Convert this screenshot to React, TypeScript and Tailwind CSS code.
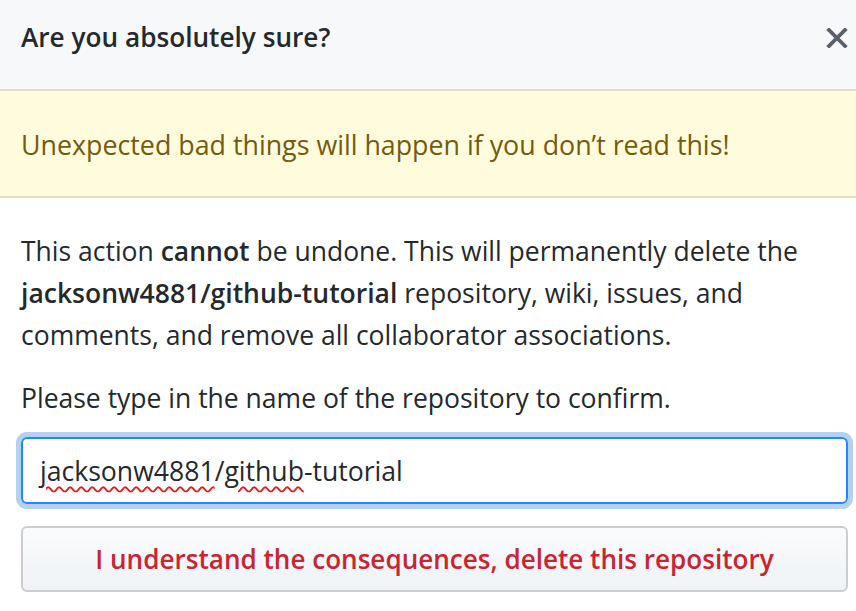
import React from 'react';

const font = { fontFamily: '"Open Sans", "Noto Sans", sans-serif' };

function CloseIcon() {
  return (
    <svg width="22" height="20" viewBox="0 0 22 20" className="text-[#586069]">
      <path d="M3 2 L19 18 M19 2 L3 18" stroke="currentColor" strokeWidth="3.8" strokeLinecap="square" />
    </svg>
  );
}

export default function App() {
  return (
    <div className="w-[856px] h-[611px] overflow-hidden bg-white" style={font}>
      <div className="w-[869px]">
        {/* Header */}
        <div className="h-[89px] bg-[#f6f8fa] flex items-center justify-between px-[21px] pb-[14px]">
          <h3 className="text-[26.2px] font-semibold text-[#24292e]">Are you absolutely sure?</h3>
          <button className="flex items-center">
            <CloseIcon />
          </button>
        </div>

        {/* Warning flash */}
        <div className="h-[109px] bg-[#fffbdd] border-y-2 border-[#e4dfc0] flex items-center px-[21px] pt-[3px]">
          <p className="text-[26.8px] text-[#735c0f]">Unexpected bad things will happen if you don’t read this!</p>
        </div>

        {/* Body */}
        <div className="px-[21px] pt-[32px] text-[26.5px] leading-[42px] text-[#24292e]">
          <p>
            This action <strong className="font-semibold">cannot</strong> be undone. This will permanently delete the{' '}
            <strong className="font-semibold">jacksonw4881/github-tutorial</strong> repository, wiki, issues, and
            comments, and remove all collaborator associations.
          </p>
          <p className="mt-[21px]">Please type in the name of the repository to confirm.</p>

          <div className="mt-[18px] h-[67px] border-2 border-[#2188ff] rounded-[6px] shadow-[0_0_0_5px_rgba(3,102,214,0.3)] flex items-center px-[17px] text-[26.6px]">
            <span className="underline decoration-wavy decoration-[#e02020] decoration-[1.5px] underline-offset-[5px]">jacksonw4881</span>
            <span>/</span>
            <span className="underline decoration-wavy decoration-[#e02020] decoration-[1.5px] underline-offset-[5px]">github</span>
            <span>-tutorial</span>
          </div>

          <button className="mt-[22px] w-full h-[66px] border-2 border-[#cbcdd0] rounded-[6px] bg-gradient-to-b from-[#fafbfc] to-[#eff3f6] text-[#cb2431] font-semibold text-[26.1px]">
            I understand the consequences, delete this repository
          </button>
        </div>
      </div>
    </div>
  );
}
